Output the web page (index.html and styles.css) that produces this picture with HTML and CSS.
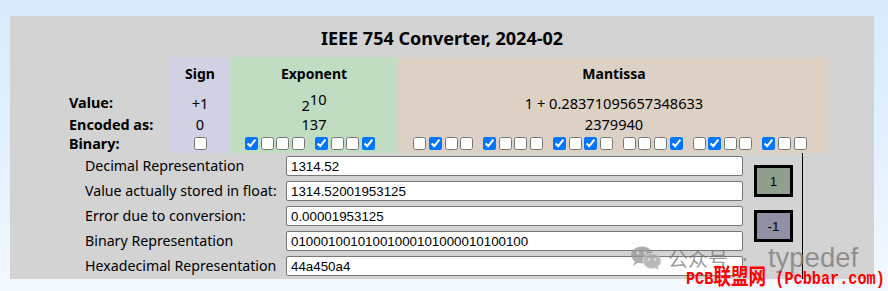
FILE: index.html
```html
<!DOCTYPE html>
<html lang="en">
<head>
  <meta charset="UTF-8">
  <title>IEEE 754 Converter</title>
  <link rel="stylesheet" href="styles.css">
</head>
<body>
  <div class="panel">
    <h1 class="title">IEEE 754 Converter, 2024-02</h1>

    <div class="fields">
      <div class="rowlabel head"></div>
      <div class="sign head">Sign</div>
      <div class="exp head">Exponent</div>
      <div class="mant head">Mantissa</div>

      <div class="rowlabel val">Value:</div>
      <div class="sign val">+1</div>
      <div class="exp val"><span class="power">2<sup class="pow">10</sup></span></div>
      <div class="mant val">1 + 0.28371095657348633</div>

      <div class="rowlabel enc">Encoded as:</div>
      <div class="sign enc">0</div>
      <div class="exp enc">137</div>
      <div class="mant enc">2379940</div>

      <div class="rowlabel bin">Binary:</div>
      <div class="sign bin">
        <span class="bits"><input type="checkbox"></span>
      </div>
      <div class="exp bin">
        <span class="bits">
          <span class="nibble"><input type="checkbox" checked><input type="checkbox"><input type="checkbox"><input type="checkbox"></span>
          <span class="nibble"><input type="checkbox" checked><input type="checkbox"><input type="checkbox"><input type="checkbox" checked></span>
        </span>
      </div>
      <div class="mant bin">
        <span class="bits">
          <span class="nibble"><input type="checkbox"><input type="checkbox" checked><input type="checkbox"><input type="checkbox"></span>
          <span class="nibble"><input type="checkbox" checked><input type="checkbox"><input type="checkbox"><input type="checkbox"></span>
          <span class="nibble"><input type="checkbox" checked><input type="checkbox"><input type="checkbox" checked><input type="checkbox"></span>
          <span class="nibble"><input type="checkbox"><input type="checkbox"><input type="checkbox"><input type="checkbox" checked></span>
          <span class="nibble"><input type="checkbox"><input type="checkbox" checked><input type="checkbox"><input type="checkbox"></span>
          <span class="nibble"><input type="checkbox" checked><input type="checkbox"><input type="checkbox"></span>
        </span>
      </div>
    </div>

    <div class="lower">
      <div class="reps">
        <label for="dec">Decimal Representation</label>
        <input type="text" id="dec" value="1314.52">

        <label for="stored">Value actually stored in float:</label>
        <input type="text" id="stored" value="1314.52001953125">

        <label for="err">Error due to conversion:</label>
        <input type="text" id="err" value="0.00001953125">

        <label for="binrep">Binary Representation</label>
        <input type="text" id="binrep" value="01000100101001000101000010100100">

        <label for="hexrep">Hexadecimal Representation</label>
        <input type="text" id="hexrep" value="44a450a4">
      </div>

      <div class="steps">
        <button class="step up">1</button>
        <button class="step down">-1</button>
      </div>
    </div>
  </div>

  <div class="wechat">
    <svg width="32" height="24" viewBox="0 0 32 24">
      <ellipse cx="12" cy="9" rx="11" ry="8.5" fill="#9a9a9a"/>
      <path d="M5 15 L3 20 L9 16 Z" fill="#9a9a9a"/>
      <circle cx="8" cy="7" r="1.4" fill="#d8d8d8"/>
      <circle cx="15" cy="7" r="1.4" fill="#d8d8d8"/>
      <ellipse cx="22" cy="15" rx="9" ry="7.5" fill="#a8a8a8" stroke="#d8d8d8" stroke-width="1"/>
      <path d="M27 20 L29 24 L24 21 Z" fill="#a8a8a8"/>
      <circle cx="19" cy="13.5" r="1.2" fill="#d8d8d8"/>
      <circle cx="25" cy="13.5" r="1.2" fill="#d8d8d8"/>
    </svg>
    <span class="wx-cjk">公众号</span>
    <span class="wx-dot">·</span>
    <span class="wx-name">typedef</span>
  </div>
  <div class="pcb">PCB<span class="pcb-cjk">联盟网</span> (Pcbbar.com)</div>
</body>
</html>
```

FILE: styles.css
```css
html, body {
  margin: 0;
  padding: 0;
  height: 100%;
}
body {
  background: linear-gradient(to bottom, #d8ebfc 0%, #e6f2fe 60%, #f4f9ff 100%);
  font-family: "Noto Sans", "Open Sans", sans-serif;
  color: #000;
  overflow: hidden;
}
.panel {
  margin: 16px 14px 0 10px;
  background-color: #d3d3d3;
  width: 864px;
}
.title {
  margin: 0;
  padding: 9px 0 5px;
  line-height: 27px;
  font-size: 18px;
  font-weight: bold;
  text-align: center;
}
.fields {
  display: grid;
  grid-template-columns: 101px 60px 168px 432px;
  grid-template-rows: 32px 25px 20px 19px;
  margin-left: 59px;
  font-size: 14.6px;
}
.fields > div {
  display: flex;
  align-items: center;
  justify-content: center;
  white-space: nowrap;
}
.fields .rowlabel {
  justify-content: flex-start;
  font-weight: bold;
  font-size: 14.4px;
}
.head {
  font-weight: bold;
  font-size: 14px;
}
.sign {
  background-color: #d1d1e4;
}
.exp {
  background-color: #c1ddc1;
}
.mant {
  background-color: #ddd1c6;
}
.val {
  line-height: 18px;
  padding-top: 2px;
}
.power {
  display: block;
  line-height: 18px;
  padding-top: 5px;
}
.pow {
  font-size: 14.6px;
  vertical-align: 6px;
  line-height: 0;
}
.bits {
  display: flex;
  gap: 10px;
  padding-right: 8px;
}
.sign .bits {
  padding-right: 0;
}
.nibble {
  display: flex;
  gap: 2.6px;
}
.bits input {
  width: 13px;
  height: 13px;
  margin: 0;
}
.lower {
  display: flex;
  align-items: flex-start;
}
.reps {
  display: grid;
  grid-template-columns: 201px 457px;
  row-gap: 5px;
  margin-left: 75px;
  padding: 3px 0;
}
.reps label {
  font-size: 14.2px;
  line-height: 20px;
  white-space: nowrap;
}
.reps input {
  height: 20px;
  box-sizing: border-box;
  margin: 0;
  padding: 0 4px;
  border: 1px solid #767676;
  border-radius: 2px;
  font-family: "Liberation Sans", Arial, sans-serif;
  font-size: 13.33px;
  background: #fff;
}
.steps {
  display: flex;
  flex-direction: column;
  gap: 13px;
  align-self: stretch;
  margin-left: 11px;
  padding: 12px 9px 0 0;
  border-right: 1px solid #000;
}
.step {
  width: 39px;
  height: 32px;
  border: 3px solid #000;
  padding: 0;
  font-family: "Liberation Sans", Arial, sans-serif;
  font-size: 13.33px;
  color: #000;
}
.up {
  background-color: #8fa08f;
}
.down {
  background-color: #9090a4;
}
.wechat {
  position: absolute;
  left: 630px;
  top: 242px;
  display: flex;
  align-items: center;
  gap: 6px;
  color: rgba(120, 120, 120, 0.75);
}
.wechat svg {
  opacity: 0.8;
}
.wx-cjk {
  font-family: "Noto Sans CJK SC", sans-serif;
  font-size: 20px;
}
.wx-dot {
  font-size: 22px;
  margin: 0 14px 0 8px;
}
.wx-name {
  font-family: "Liberation Sans", Arial, sans-serif;
  font-size: 27.5px;
}
.pcb {
  position: absolute;
  left: 686px;
  top: 263px;
  line-height: 22px;
  color: #ff0000;
  font-family: "Liberation Mono", monospace;
  font-weight: bold;
  font-size: 19px;
  white-space: nowrap;
  transform: scaleX(0.8);
  transform-origin: left top;
}
.pcb-cjk {
  font-family: "Noto Sans CJK SC", sans-serif;
  font-size: 22px;
  line-height: 22px;
}
```
